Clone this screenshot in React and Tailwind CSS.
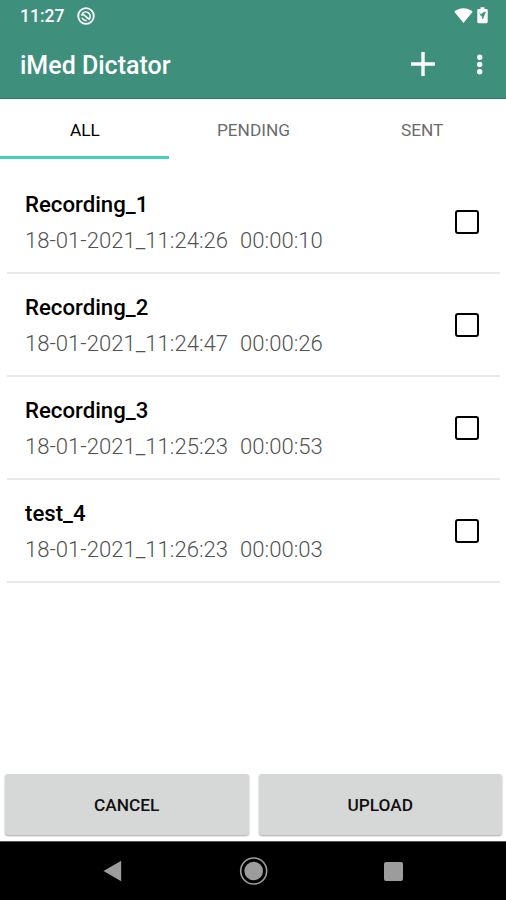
import { useState } from "react";

const TABS = ["ALL", "PENDING", "SENT"];

const RECORDINGS = [
  { name: "Recording_1", date: "18-01-2021_11:24:26", duration: "00:00:10" },
  { name: "Recording_2", date: "18-01-2021_11:24:47", duration: "00:00:26" },
  { name: "Recording_3", date: "18-01-2021_11:25:23", duration: "00:00:53" },
  { name: "test_4", date: "18-01-2021_11:26:23", duration: "00:00:03" },
];

const buttonClass =
  "flex-1 h-[61px] pt-[3px] rounded-[3px] bg-[#d6d8d7] text-[#111] text-[17.3px] font-medium shadow-[0_1px_2px_rgba(0,0,0,0.35)]";

function StatusBar() {
  return (
    <div className="h-8 flex items-center pl-5 pr-[17px] text-white">
      <span className="text-[17.5px] leading-8 font-medium w-[57px]">11:27</span>
      <svg width="18" height="18" viewBox="0 0 18 18" fill="none" stroke="currentColor">
        <circle cx="9" cy="9" r="7.8" strokeWidth="1.8" />
        <path d="M5.200 6.800A4.400 4.400 0 1 1 12.300 12M5 10.800a4.400 4.400 0 0 0 4.600 2.600" strokeWidth="1.600" />
        <path d="M4.200 8.200c2-1.200 3.200-.2 4.300 1s2.200 2.500 4.300 3.200" strokeWidth="1.700" />
      </svg>
      <svg className="ml-auto" width="20" height="16" viewBox="0 0 20 16" fill="currentColor">
        <path d="M9.500 15 .3 3.800C2.700 1.500 6 .2 9.500.2s6.800 1.300 9.200 3.600z" />
      </svg>
      <svg className="ml-[3px]" width="12" height="18" viewBox="0 0 12 18">
        <path d="M3.500.3h4v1.800h2c.7 0 1.200.5 1.200 1.200v11.800c0 .7-.5 1.200-1.200 1.200h-8c-.7 0-1.200-.5-1.200-1.200V3.300c0-.7.500-1.200 1.200-1.200h2z" fill="currentColor" />
        <path d="M2.500 5.500 3.700 8M8.500 5 5.700 12 5 9 3.300 8 6.200 5.700z" fill="#3e8f7b" stroke="#3e8f7b" strokeWidth=".6" />
      </svg>
    </div>
  );
}

function AppBar() {
  return (
    <div className="h-[66px] flex items-center pl-5 pr-[17px] text-white">
      <h1 className="text-[25px] font-medium pt-[2px]">iMed Dictator</h1>
      <button type="button" aria-label="Add" className="ml-auto -mt-[2px]">
        <svg width="24" height="24" viewBox="0 0 24 24" fill="currentColor">
          <path d="M10.300 0h3.400v10.300H24v3.400H13.700V24h-3.400V13.700H0v-3.400h10.300z" />
        </svg>
      </button>
      <button type="button" aria-label="More options" className="ml-9">
        <svg width="18" height="24" viewBox="0 0 18 24" fill="currentColor">
          <circle cx="8.700" cy="4.200" r="2.700" />
          <circle cx="8.700" cy="11.500" r="2.700" />
          <circle cx="8.700" cy="18.800" r="2.700" />
        </svg>
      </button>
    </div>
  );
}

function Recording({ item, checked, onToggle }) {
  return (
    <li className="h-[103px] ml-[7px] mr-[6px] pl-[18px] pr-[21px] border-b-2 border-[#e8e8e8] flex items-center justify-between">
      <div className="pt-px">
        <p className="text-[22.2px] leading-9 font-medium text-black">{item.name}</p>
        <p className="text-[22.1px] leading-9 text-[#525252] font-light">
          <span>{item.date}</span>
          <span className="ml-3">{item.duration}</span>
        </p>
      </div>
      <button
        type="button"
        role="checkbox"
        aria-checked={checked}
        aria-label={item.name}
        onClick={onToggle}
        className={`w-6 h-6 rounded-[3px] border-[2.500px] border-black ${checked ? "bg-[#2dd4bf]" : ""}`}
      />
    </li>
  );
}

export default function App() {
  const [tab, setTab] = useState("ALL");
  const [selected, setSelected] = useState([]);

  function toggle(name) {
    setSelected((prev) =>
      prev.includes(name) ? prev.filter((n) => n !== name) : [...prev, name]
    );
  }

  return (
    <div className="w-[506px] h-[900px] flex flex-col bg-white font-[Roboto,sans-serif]">
      <header className="bg-[#3e8f7b] border-b border-[#2c7e69] h-[99px]">
        <StatusBar />
        <AppBar />
      </header>

      {/* Tabs */}
      <nav className="grid grid-cols-3 h-[60px]">
        {TABS.map((t) => (
          <button
            key={t}
            type="button"
            onClick={() => setTab(t)}
            className={`text-[17.3px] border-b-[3px] pt-[6px] pl-px ${
              tab === t ? "text-black border-[#45d0bd]" : "text-[#6b6b6b] border-transparent"
            }`}
          >
            {t}
          </button>
        ))}
      </nav>

      <ul className="flex-1 pt-3">
        {RECORDINGS.map((item) => (
          <Recording
            key={item.name}
            item={item}
            checked={selected.includes(item.name)}
            onToggle={() => toggle(item.name)}
          />
        ))}
      </ul>

      <div className="flex gap-[10px] pl-[5px] pr-1 pb-[6px]">
        <button type="button" className={buttonClass}>CANCEL</button>
        <button type="button" className={buttonClass}>UPLOAD</button>
      </div>

      {/* System navigation */}
      <div className="h-[59px] bg-black border-t border-[#555] flex items-center justify-center">
        <svg width="20" height="22" viewBox="0 0 20 22" fill="#9c9c9c">
          <path d="M18.200.8v20.400L.5 11z" />
        </svg>
        <svg className="mx-[116px]" width="30" height="30" viewBox="0 0 30 30" fill="none">
          <circle cx="14.700" cy="15" r="13" stroke="#9c9c9c" strokeWidth="1.600" />
          <circle cx="14.700" cy="15" r="9.300" fill="#9c9c9c" />
        </svg>
        <span className="w-[19px] h-[19px] -ml-px mr-px rounded-[2px] bg-[#9c9c9c]" />
      </div>
    </div>
  );
}
